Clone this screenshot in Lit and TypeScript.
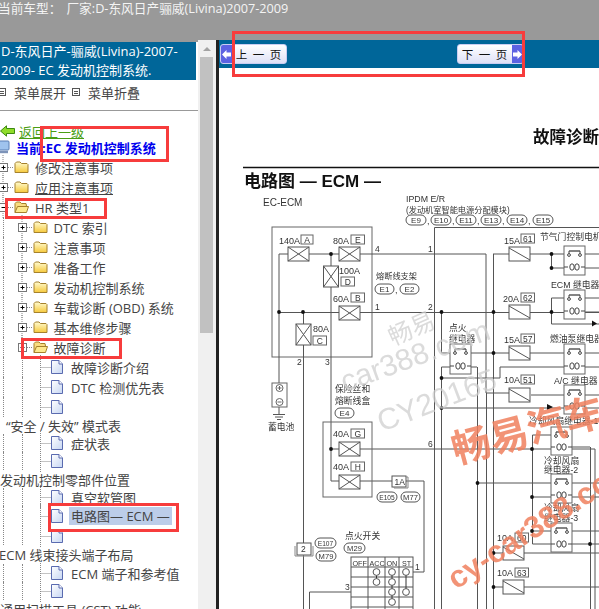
import { LitElement, html, css, svg } from "lit";
import { customElement } from "lit/decorators.js";

type Row = { t?: string; lvl: number; kind: "closed" | "open" | "file" | "text" | "sel"; h?: number; pad?: string; u?: boolean };

const ROWS: Row[] = [
  { t: "修改注意事项", lvl: 0, kind: "closed" },
  { t: "应用注意事项", lvl: 0, kind: "closed", u: true },
  { t: "HR 类型1", lvl: 0, kind: "open" },
  { t: "DTC 索引", lvl: 1, kind: "closed" },
  { t: "注意事项", lvl: 1, kind: "closed" },
  { t: "准备工作", lvl: 1, kind: "closed" },
  { t: "发动机控制系统", lvl: 1, kind: "closed" },
  { t: "车载诊断 (OBD) 系统", lvl: 1, kind: "closed" },
  { t: "基本维修步骤", lvl: 1, kind: "closed" },
  { t: "故障诊断", lvl: 1, kind: "open" },
  { t: "故障诊断介绍", lvl: 2, kind: "file" },
  { t: "DTC 检测优先表", lvl: 2, kind: "file" },
  { lvl: 2, kind: "file" },
  { t: "“安全 / 失效” 模式表", lvl: 2, kind: "text", h: 17, pad: "p6" },
  { t: "症状表", lvl: 2, kind: "file", h: 18 },
  { lvl: 2, kind: "file", h: 18 },
  { t: "发动机控制零部件位置", lvl: 2, kind: "text", h: 18, pad: "p0" },
  { t: "真空软管图", lvl: 2, kind: "file", h: 18 },
  { t: "电路图— ECM —", lvl: 2, kind: "sel", h: 20 },
  { lvl: 2, kind: "file", h: 19 },
  { t: "ECM 线束接头端子布局", lvl: 2, kind: "text", h: 19, pad: "pm" },
  { t: "ECM 端子和参考值", lvl: 2, kind: "file", h: 18 },
  { lvl: 2, kind: "file", h: 18 },
  { t: "通用扫描工具 (CST) 功能", lvl: 2, kind: "text", h: 18, pad: "p0" },
];

const folderClosed = svg`<svg class="ic" width="15" height="14" viewBox="0 0 15 14"><defs><linearGradient id="fy" x1="0" y1="0" x2="0" y2="1"><stop offset="0" stop-color="#fffbd0"/><stop offset="1" stop-color="#f6c93c"/></linearGradient></defs><path d="M1 12.5V3.5L2.5 2H6l1.5 1.5H13l1 1v8z" fill="url(#fy)" stroke="#a5812c"/></svg>`;
const folderOpen = svg`<svg class="ic" width="15" height="14" viewBox="0 0 15 14"><path d="M1 12.5V3.5L2.5 2H6l1.5 1.5H12l.5 2.5" fill="#f9dd80" stroke="#a5812c"/><path d="M1 12.5L3.5 6.5H14.5L12.5 12.5z" fill="#fde98c" stroke="#a5812c"/></svg>`;
const fileIc = svg`<svg class="ic" width="12" height="14" viewBox="0 0 12 14"><defs><linearGradient id="fb" x1="0" y1="0" x2="1" y2="1"><stop offset="0" stop-color="#ffffff"/><stop offset="1" stop-color="#c6d6f2"/></linearGradient></defs><path d="M.5.5H8L11.5 4V13.5H.5z" fill="url(#fb)" stroke="#5a6bb0"/><path d="M8 .5V4H11.5" fill="#fff" stroke="#5a6bb0"/></svg>`;

function stem(kind: string) {
  if (kind === "closed" || kind === "open") {
    return svg`<svg class="stem" width="11" height="20" viewBox="0 0 11 20">
      <path d="M0 -2V22" stroke="#888" stroke-dasharray="1 1" fill="none"/>
      <path d="M5 10.5H11" stroke="#888" stroke-dasharray="1 1" fill="none"/>
      <rect x="-3.5" y="6.5" width="8" height="8" fill="#fff" stroke="#777"/>
      <path d="M-1.5 10.5H2.5" stroke="#000"/>
      ${kind === "closed" ? svg`<path d="M.5 8.5V12.5" stroke="#000"/>` : ""}
    </svg>`;
  }
  return svg`<svg class="stem" width="11" height="20" viewBox="0 0 11 20">
    <path d="M.5 -2V22M.5 10.5H11" stroke="#888" stroke-dasharray="1 1" fill="none"/>
  </svg>`;
}

/* ---- diagram helpers, page coordinates ---- */
const W = "#555";
const line = (d: string) => svg`<path d=${d} fill="none" stroke=${W} stroke-width="1"/>`;
const dot = (x: number, y: number) => svg`<circle cx=${x} cy=${y} r="1.9" fill="#111"/>`;
const t = (x: number, y: number, s: string, size = 9, cls = "") =>
  svg`<text x=${x} y=${y} font-size=${size} class=${cls}>${s}</text>`;
const xfuse = (x: number, y: number, w = 21, h = 14) => svg`
  <rect x=${x} y=${y} width=${w} height=${h} fill="#fff" stroke=${W}/>
  <path d="M${x} ${y}L${x + w} ${y + h}M${x} ${y + h}L${x + w} ${y}" stroke=${W} fill="none"/>`;
const sfuse = (x: number, y: number) => svg`
  <rect x=${x} y=${y} width="21" height="14" fill="#fff" stroke=${W}/>
  <path d="M${x} ${y + 1}L${x + 21} ${y + 13}" stroke=${W} fill="none"/>`;
const tag = (x: number, y: number, s: string, w = 13.5) => svg`
  <rect x=${x} y=${y} width=${w} height="9" fill="#fff" stroke="#666"/>
  <text x=${x + w / 2} y=${y + 7.8} font-size="8.5" text-anchor="middle">${s}</text>`;
const oval = (x: number, y: number, w: number, s: string, size = 8) => svg`
  <rect x=${x} y=${y} width=${w} height="10" rx="5" fill="#fff" stroke="#555"/>
  <text x=${x + w / 2} y=${y + 8.2} font-size=${size} text-anchor="middle">${s}</text>`;
const relay = (x: number, y: number, h = 29) => svg`
  <rect x=${x} y=${y} width="21" height=${h} fill="#fff" stroke="#666"/>
  <path d="M${x + 5} ${y + 5}H${x + 16}" stroke="#333" stroke-width="1.2"/>
  <path d="M${x + 5} ${y + 5}V${y + 8}M${x + 16} ${y + 5}V${y + 8}" stroke="#444"/>
  <circle cx=${x + 5} cy=${y + 9} r="1.4" fill="#fff" stroke="#444"/>
  <circle cx=${x + 16} cy=${y + 9} r="1.4" fill="#fff" stroke="#444"/>
  <path d="M${x} ${y + h - 8}H${x + 4}M${x + 17} ${y + h - 8}H${x + 21}" stroke="#444"/>
  <ellipse cx=${x + 8} cy=${y + h - 8} rx="2.2" ry="3.2" fill="#fff" stroke="#444"/>
  <ellipse cx=${x + 13} cy=${y + h - 8} rx="2.2" ry="3.2" fill="#fff" stroke="#444"/>`;
const sw = (x: number, y: number) => svg`<circle cx=${x} cy=${y} r="3.4" fill="#fff" stroke="#555"/>`;

function diagram() {
  return svg`
  <svg class="dg" viewBox="219 68 380 541" width="380" height="541">
    <g class="cjk">
    <path d="M243 167.5H599" stroke="#111" stroke-width="1.4"/>
    ${t(533, 143, "故障诊断", 16.5, "b")}
    ${t(244, 187, "电路图 — ECM —", 17, "b")}
    ${t(263, 206, "EC-ECM", 10)}
    ${t(406, 202, "IPDM E/R", 8.8)}
    ${t(406, 213, "(发动机室智能电源分配模块)", 8.2)}
    ${oval(406, 215, 20, "E9")} ${t(427, 224, ",")}
    ${oval(431, 215, 20, "E10")} ${t(452, 224, ",")}
    ${oval(456, 215, 20, "E11")} ${t(477, 224, ",")}
    ${oval(481, 215, 20, "E13")} ${t(502, 224, ",")}
    ${oval(507, 215, 20, "E14")} ${t(528, 224, ",")}
    ${oval(533, 215, 20, "E15")}

    <rect x="272" y="227" width="100" height="130" fill="none" stroke="#666"/>
    ${line("M279 383V254H486V393H509")}
    ${line("M331 254V481H392")} ${line("M406 481H424V572H413")}
    ${line("M279 312.5H599")}
    ${line("M303.5 312V609")}
    ${line("M434.5 609V227.5H599")}
    ${line("M493.5 254V609")}
    ${line("M486.5 393V609")}
    ${line("M477.5 367V609")}
    ${line("M493 254H564M585 254H599M551.5 254V268H564M585 268H599")}
    ${line("M551.5 298H564M551.5 298V324H599M585 298H599M585 312H599")}
    ${line("M441.5 312V353H450M471 353H564M585 353H599")}
    ${line("M441.5 609V367H450M471 367H477M441.5 378H500V367H564M585 367H599")}
    ${line("M531 395H564M585 395H599")}
    ${line("M441 408H599")}
    ${line("M331 449H595V609")}
    ${line("M532.5 435V544H551M532.5 435H551M572 447H590M572 544H599")}
    ${line("M477 483H551M572 483H599")}
    ${line("M532 497H551M572 497H599")}
    ${line("M532 531H551M572 531H599")}
    ${line("M590.5 447V609")}
    ${line("M493 553H599")} ${line("M493 587H599")}
    ${line("M309.5 609V592H351")}
    ${line("M279 407V414")}
    <path d="M273 414.5H285M275 417H283M277 419.5H281" stroke="#555" fill="none"/>

    ${xfuse(288, 247)} ${xfuse(339, 247)} ${xfuse(339, 306)}
    ${xfuse(323.5, 266, 15, 21)} ${xfuse(296, 324, 15, 21)}
    ${xfuse(339, 442)} ${xfuse(339, 475)}
    ${t(279, 244, "140A")} ${tag(301, 235, "A", 12)}
    ${t(333, 244, "80A")} ${tag(351, 235, "E")}
    ${t(339, 274, "100A")} ${tag(341, 277, "D")}
    ${t(333, 302, "60A")} ${tag(351, 293, "B")}
    ${t(313, 332, "80A")} ${tag(313, 336, "C")}
    ${t(375, 252, "4", 8.5)} ${t(375, 310, "1", 8.5)} ${t(297, 365, "2", 8.5)} ${t(325, 365, "3", 8.5)}
    ${t(428, 252, "1", 8.5)} ${t(428, 310, "2", 8.5)} ${t(428, 447, "6", 8.5)}
    ${t(376, 279, "熔断线支架", 8.2)}
    ${oval(375, 284, 19, "E1")} ${t(395, 293, ",")} ${oval(400, 284, 19, "E2")}
    ${dot(331, 254)} ${dot(279, 312)} ${dot(303, 312)}

    <rect x="272" y="383" width="15" height="24" fill="#fff" stroke="#666"/>
    <circle cx="279.5" cy="388" r="3.5" fill="#fff" stroke="#666"/>
    <circle cx="279.5" cy="402" r="3.5" fill="#fff" stroke="#666"/>
    <path d="M277.5 388H281.5M279.5 386V390M277.5 402H281.5" stroke="#666"/>
    ${t(268, 430, "蓄电池", 8.8)}
    ${t(335, 392, "保险丝和", 8.8)} ${t(335, 404, "熔断线盒", 8.8)}
    ${oval(335, 408, 19, "E4")}
    <rect x="323" y="422" width="49" height="75" fill="none" stroke="#666"/>
    ${t(333, 437, "40A")} ${tag(351, 429, "G")}
    ${t(333, 470, "40A")} ${tag(351, 462, "H")}
    ${dot(331, 449)}
    <rect x="392" y="476" width="14" height="11" fill="#fff" stroke="#555"/>
    <path d="M406 477H408V488H394V487" fill="none" stroke="#888"/>
    ${t(394.5, 485, "1A", 8.5)}
    ${oval(377, 492, 20, "E105", 6.6)} ${oval(401, 492, 19, "M77", 7.6)}
    <rect x="297" y="543" width="14" height="12" fill="#fff" stroke="#555"/>
    <path d="M295 546V556H313V546" fill="none" stroke="#888"/>
    ${t(301, 552, "2", 8.5)}
    ${oval(315, 538, 21, "E107", 6.6)} ${oval(316, 551, 20, "M79", 7.6)}
    ${t(345, 539, "点火开关", 8.8)}
    ${oval(344, 543, 21, "M29", 7.6)}

    <rect x="351" y="557" width="62" height="60" fill="#fff" stroke="#555"/>
    <path d="M368 557V617M385 557V617M399 557V617M351 567H413M351 577H413M351 587H413M351 597H413M351 607H413" stroke="#555" fill="none"/>
    ${t(352.5, 565.5, "OFF", 7.2)} ${t(369.5, 565.5, "ACC", 7.2)} ${t(386.5, 565.5, "ON", 7.2)} ${t(402, 565.5, "ST", 7.2)}
    ${t(345, 590, "3", 8.5)} ${t(415, 570, "1", 8.5)}
    <path d="M376.5 572V582M392 572V602M406 572V592" stroke="#333" fill="none"/>
    ${sw(376.5, 572)} ${sw(376.5, 582)} ${sw(392, 572)} ${sw(392, 582)} ${sw(392, 592)} ${sw(392, 602)} ${sw(406, 572)} ${sw(406, 592)}

    ${sfuse(509, 247)} ${sfuse(509, 305)} ${sfuse(509, 346)} ${sfuse(509, 388)}
    ${sfuse(503, 546)} ${sfuse(503, 580)}
    ${t(504, 244, "15A")} ${tag(521, 234, "61")}
    ${t(503, 302, "20A")} ${tag(521, 293, "62")}
    ${t(504, 343, "15A")} ${tag(521, 334, "57")}
    ${t(504, 383, "10A")} ${tag(521, 375, "51")}
    ${t(497, 541, "10A")} ${tag(515, 533, "60")}
    ${t(497, 576, "10A")} ${tag(515, 568, "63")}
    ${t(540, 240, "节气门控制电机", 8.8)}
    ${t(551, 288, "ECM 继电器", 8.8)}
    ${t(550, 342, "燃油泵继电器", 8.8)}
    ${t(554, 384, "A/C 继电器", 8.8)}
    ${t(449, 331, "点火", 8.8)} ${t(449, 342, "继电器", 8.8)}
    ${t(529, 424, "冷却风扇继电器-1", 8.8)}
    ${t(544, 464, "冷却风扇", 8.8)} ${t(544, 473, "继电器-2", 8.8)}
    ${t(544, 511, "冷却风扇", 8.8)} ${t(544, 521, "继电器-3", 8.8)}
    ${relay(564, 246)} ${relay(564, 290)} ${relay(450, 344, 30)} ${relay(564, 344, 30)} ${relay(564, 385, 29)}
    ${relay(551, 427, 28)} ${relay(551, 474, 29)} ${relay(551, 523, 29)}
    ${dot(551.5, 254)} ${dot(551.5, 268)} ${dot(441.5, 312)} ${dot(493.5, 312)} ${dot(551.5, 312)}
    ${dot(493.5, 353)} ${dot(441.5, 378)} ${dot(441.5, 408)} ${dot(532, 449)} ${dot(477.5, 483)} ${dot(532, 497)}
    ${dot(532, 531)} ${dot(590, 544)} ${dot(493.5, 553)} ${dot(493.5, 587)}
    <path d="M592 320.5L597 323.5L592 326.5Z" fill="#111"/>
    <path d="M547 404L553 407L547 410Z" fill="#111"/>

    <g class="wm">
      <text transform="translate(393 346) rotate(-24)" font-size="24">畅易</text>
      <text transform="translate(345 392) rotate(-20)" font-size="30">car388.com</text>
      <text transform="translate(382 432) rotate(-21)" font-size="30">CY20165</text>
    </g>
    <g class="wr">
      <text transform="translate(456 464) rotate(-15)" font-size="39">畅易汽车</text>
      <text transform="translate(456 590) rotate(-33)" font-size="31">cy-car388.com</text>
    </g>
    </g>
  </svg>`;
}

@customElement("app-root")
export class AppRoot extends LitElement {
  static styles = css`
    :host {
      display: flex;
      flex-direction: column;
      width: 599px;
      height: 609px;
      overflow: hidden;
      position: relative;
      background: #fff;
      font-family: "Open Sans", "Noto Sans CJK SC", sans-serif;
      font-size: 13px;
      color: #333;
    }
    .top {
      height: 40px;
      flex: none;
      background: #999;
      color: #f4f4f4;
      font-size: 12.7px;
      line-height: 17px;
      white-space: nowrap;
      display: flex;
      gap: 5px;
      margin-left: -2px;
    }
    .body { flex: 1; display: flex; min-height: 0; }
    .aside { width: 216px; flex: none; display: flex; overflow: hidden; }
    .lcol { width: 198px; flex: none; overflow: hidden; }
    .gapbar { height: 2px; background: #999; }
    .head {
      width: 196px;
      height: 38px;
      box-sizing: border-box;
      background: #006699;
      color: #fff;
      font-size: 13px;
      line-height: 19px;
      padding-left: 1px;
      overflow: hidden;
    }
    .menu {
      height: 31px;
      box-sizing: border-box;
      border-bottom: 1px solid #999;
      display: flex;
      align-items: center;
      padding-bottom: 6px;
      margin-left: -2px;
      color: #444;
    }
    .mi { width: 8px; height: 8px; border: 1px solid #555; flex: none; box-sizing: border-box;
      background: repeating-linear-gradient(#555 0 1px, #fff 1px 2px); background-clip: content-box; padding: 1px; }
    .mt { margin-left: 8px; margin-right: 6px; }
    .back { display: flex; align-items: center; height: 20px; margin-top: 10px; color: #4a9e14; gap: 4px; }
    .back span { text-decoration: underline; }
    .cur { display: flex; align-items: center; height: 12px; margin-bottom: 4px; font-weight: 700; color: #0000ee; gap: 6px; }
    .row { display: flex; align-items: center; height: 20px; padding-left: 3px; white-space: nowrap; box-sizing: border-box; color: #444; }
    .g { width: 18.5px; flex: none; align-self: stretch; box-sizing: border-box; border-left: 1px dotted #888; }
    .stem { flex: none; overflow: visible; }
    .ic { flex: none; display: block; }
    .lb { margin-left: 6px; }
    .lb.f { margin-left: 8px; }
    .u { text-decoration: underline; }
    .sel { background: #bccde9; color: #444; padding: 0 2px; margin-left: 6px; line-height: 18px; }
    .p6 { padding-left: 6px; }
    .p0 { padding-left: 0; }
    .pm { padding-left: 0; margin-left: -1px; }
    .scroll { width: 18px; flex: none; background: #f0f0f0; box-sizing: border-box; padding: 2px 2px 0 2px; }
    .sarrow { display: block; margin: 5px auto 6px; width: 0; height: 0; border-left: 4px solid transparent; border-right: 4px solid transparent; border-bottom: 4px solid #a3a3a3; }
    .thumb { height: 276px; width: 13px; background: #c1c1c1; }
    .split { width: 3px; flex: none; background: #222; }
    .main { flex: 1; min-width: 0; display: flex; flex-direction: column; overflow: hidden; }
    .bar { height: 28px; box-sizing: border-box; flex: none; background: #006699; display: flex; align-items: flex-start; justify-content: space-between; padding: 4px 75px 0 1px; }
    .btn { width: 67px; height: 20px; box-sizing: border-box; display: flex; align-items: center;
      border: 1px solid #c9cdf2; border-radius: 3px; background: linear-gradient(#fff, #dfe1f6); overflow: hidden; }
    .btn .arr { width: 11px; align-self: stretch; background: #5c62e2; flex: none; display: flex; align-items: center; justify-content: center; }
    .btn .tx { flex: 1; text-align: center; font-size: 11.5px; color: #111; letter-spacing: 1px; font-family: "Noto Sans CJK SC", sans-serif; word-spacing: 1px; }
    .dg { display: block; flex: none; filter: blur(0.35px); }
    .dg text { fill: #333; font-family: "Liberation Sans", "Noto Sans CJK SC", sans-serif; }
    .dg .b { font-weight: 700; fill: #111; }
    .dg .wm text { fill: #cfcfcf; fill-opacity: .75; }
    .dg .wr text { fill: #f0805e; fill-opacity: .85; font-weight: 700; }
    .mark { position: absolute; box-sizing: border-box; border: 3px solid #f73c3c; pointer-events: none; }
    .m1 { left: 232px; top: 31px; width: 293px; height: 46px; }
    .m2 { left: 40px; top: 126px; width: 129px; height: 36px; }
    .m3 { left: 5px; top: 198px; width: 102px; height: 21px; }
    .m4 { left: 21px; top: 338px; width: 101px; height: 21px; }
    .m5 { left: 48px; top: 503px; width: 131px; height: 29px; }
  `;

  private row(r: Row) {
    const style = r.h ? `height:${r.h}px` : "";
    if (r.kind === "text") {
      return html`<div class="row ${r.pad ?? ""}" style=${style}>${r.t}</div>`;
    }
    const guides = Array.from({ length: r.lvl }, () => html`<span class="g"></span>`);
    const isFile = r.kind === "file" || r.kind === "sel";
    const ico = isFile ? fileIc : r.kind === "open" ? folderOpen : folderClosed;
    return html`<div class="row" style=${style}>
      ${guides}${stem(r.kind === "sel" ? "file" : r.kind)}${ico}
      ${r.t
        ? r.kind === "sel"
          ? html`<span class="sel">${r.t}</span>`
          : html`<span class="lb ${isFile ? "f" : ""} ${r.u ? "u" : ""}">${r.t}</span>`
        : ""}
    </div>`;
  }

  render() {
    return html`
      <div class="top"><span>当前车型：</span><span>厂家:D-东风日产骊威(Livina)2007-2009</span></div>
      <div class="body">
        <div class="aside">
          <div class="lcol">
            <div class="gapbar"></div>
            <div class="head">D-东风日产-骊威(Livina)-2007-<br />2009- EC 发动机控制系统.</div>
            <div class="menu">
              <span class="mi"></span><span class="mt">菜单展开</span>
              <span class="mi"></span><span class="mt">菜单折叠</span>
            </div>
            <div class="back">
              <svg width="15" height="12" viewBox="0 0 15 12"><path d="M.5 6L6.5 .8V3.5H14.5V8.5H6.5V11.2Z" fill="#8fdc2a" stroke="#3d8a10"/></svg>
              <span>返回上一级</span>
            </div>
            <div class="cur">
              <svg width="10" height="14" viewBox="0 0 10 14"><rect x="-4" y="1" width="13" height="9" rx="1" fill="#9fc3ee" stroke="#5a7fb5"/><path d="M-3 12H8" stroke="#7d93b8" stroke-width="2.4"/></svg>
              <span>当前:EC 发动机控制系统</span>
            </div>
            <div class="tree">${ROWS.map((r) => this.row(r))}</div>
          </div>
          <div class="scroll"><span class="sarrow"></span><div class="thumb"></div></div>
        </div>
        <div class="split"></div>
        <div class="main">
          <div class="bar">
            <div class="btn">
              <span class="arr"><svg width="9" height="9" viewBox="0 0 9 9"><path d="M0 4.5L4.5 0V2.5H9V6.5H4.5V9Z" fill="#fff"/></svg></span>
              <span class="tx">上 一 页</span>
            </div>
            <div class="btn">
              <span class="tx">下 一 页</span>
              <span class="arr"><svg width="9" height="9" viewBox="0 0 9 9"><path d="M9 4.5L4.5 0V2.5H0V6.5H4.5V9Z" fill="#fff"/></svg></span>
            </div>
          </div>
          ${diagram()}
        </div>
      </div>
      <div class="mark m1"></div>
      <div class="mark m2"></div>
      <div class="mark m3"></div>
      <div class="mark m4"></div>
      <div class="mark m5"></div>
    `;
  }
}
